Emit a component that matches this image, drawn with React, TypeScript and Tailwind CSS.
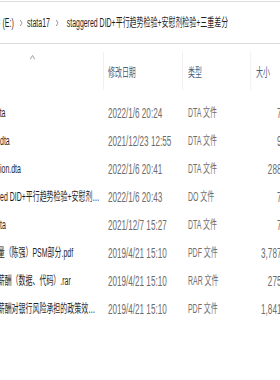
const files = [
  { name: "panel.dta", date: "2022/1/6 20:24", type: "DTA 文件", size: "7 KB" },
  { name: "data_1.dta", date: "2021/12/23 12:55", type: "DTA 文件", size: "9 KB" },
  { name: "regression.dta", date: "2022/1/6 20:41", type: "DTA 文件", size: "288 KB" },
  {
    name: "staggered DID+平行趋势检验+安慰剂检验+三重差分.do",
    date: "2022/1/6 20:43",
    type: "DO 文件",
    size: "7 KB",
  },
  { name: "data2.dta", date: "2021/12/7 15:27", type: "DTA 文件", size: "7 KB" },
  { name: "高级计量（陈强）PSM部分.pdf", date: "2019/4/21 15:10", type: "PDF 文件", size: "3,787 KB" },
  { name: "金融业薪酬（数据、代码）.rar", date: "2019/4/21 15:10", type: "RAR 文件", size: "275 KB" },
  {
    name: "金融业薪酬对银行风险承担的政策效应研究.pdf",
    date: "2019/4/21 15:10",
    type: "PDF 文件",
    size: "1,841 KB",
  },
];

function Chevron({ className }: { className: string }) {
  return (
    <svg width="5" height="8" viewBox="0 0 5 8" className={className}>
      <path d="M1 1 L4 4 L1 7" fill="none" stroke="#7a7a7a" strokeWidth="1" />
    </svg>
  );
}

export default function App() {
  return (
    <div className="relative h-[380px] w-[280px] overflow-hidden bg-white font-['Liberation_Sans','Noto_Sans_CJK_SC',sans-serif] text-[12px]">
      {/* the whole view is horizontally squeezed, like the shot */}
      <div className="w-[560px] origin-top-left [transform:scaleX(0.58)]">
        {/* address bar */}
        <div className="mt-[1px] flex h-[43px] items-center border-y border-[#dcdcdc] text-[#1f1f1f]">
          <div className="-ml-[35px] flex items-center whitespace-nowrap">
            <span>新加卷 (E:)</span>
            <Chevron className="ml-[10px] shrink-0" />
            <span className="ml-[8px]">stata17</span>
            <Chevron className="ml-[10px] shrink-0" />
            <span className="ml-[14px]">staggered DID+平行趋势检验+安慰剂检验+三重差分</span>
          </div>
        </div>

        {/* column headers */}
        <div className="mt-[8px] -ml-[65.5px] flex h-[38px] text-[#4c607a]">
          <div className="relative w-[244.8px] shrink-0 border-r border-[#e5e5e5]">
            <svg
              width="9"
              height="5"
              viewBox="0 0 9 5"
              className="absolute left-1/2 top-[3px] -translate-x-1/2"
            >
              <path d="M0.5 4.5 L4.5 0.5 L8.5 4.5" fill="none" stroke="#8a8a8a" strokeWidth="1" />
            </svg>
          </div>
          <div className="flex w-[136.2px] shrink-0 items-center border-r border-[#e5e5e5] pl-[6.9px] pt-[3px]">
            修改日期
          </div>
          <div className="flex w-[117.3px] shrink-0 items-center border-r border-[#e5e5e5] pl-[8.6px] pt-[3px]">
            类型
          </div>
          <div className="flex w-[84px] shrink-0 items-center pl-[8.6px] pt-[3px]">大小</div>
        </div>

        {/* file rows */}
        <div className="mt-[9px] -ml-[65.5px] flex flex-col">
          {files.map((f) => (
            <div key={f.name} className="flex h-[28px] items-center whitespace-nowrap">
              <div className="w-[244.8px] shrink-0 truncate pl-[25.5px] pr-[6px] text-[#1e1e1e]">{f.name}</div>
              <div className="w-[136.2px] shrink-0 pl-[6.9px] text-[14px] text-[#6d6d6d]">{f.date}</div>
              <div className="w-[117.3px] shrink-0 pl-[8.6px] text-[12px] text-[#6d6d6d]">{f.type}</div>
              <div className="w-[84px] shrink-0 pr-[9px] text-right text-[14px] text-[#6d6d6d]">{f.size}</div>
            </div>
          ))}
        </div>
      </div>
    </div>
  );
}
